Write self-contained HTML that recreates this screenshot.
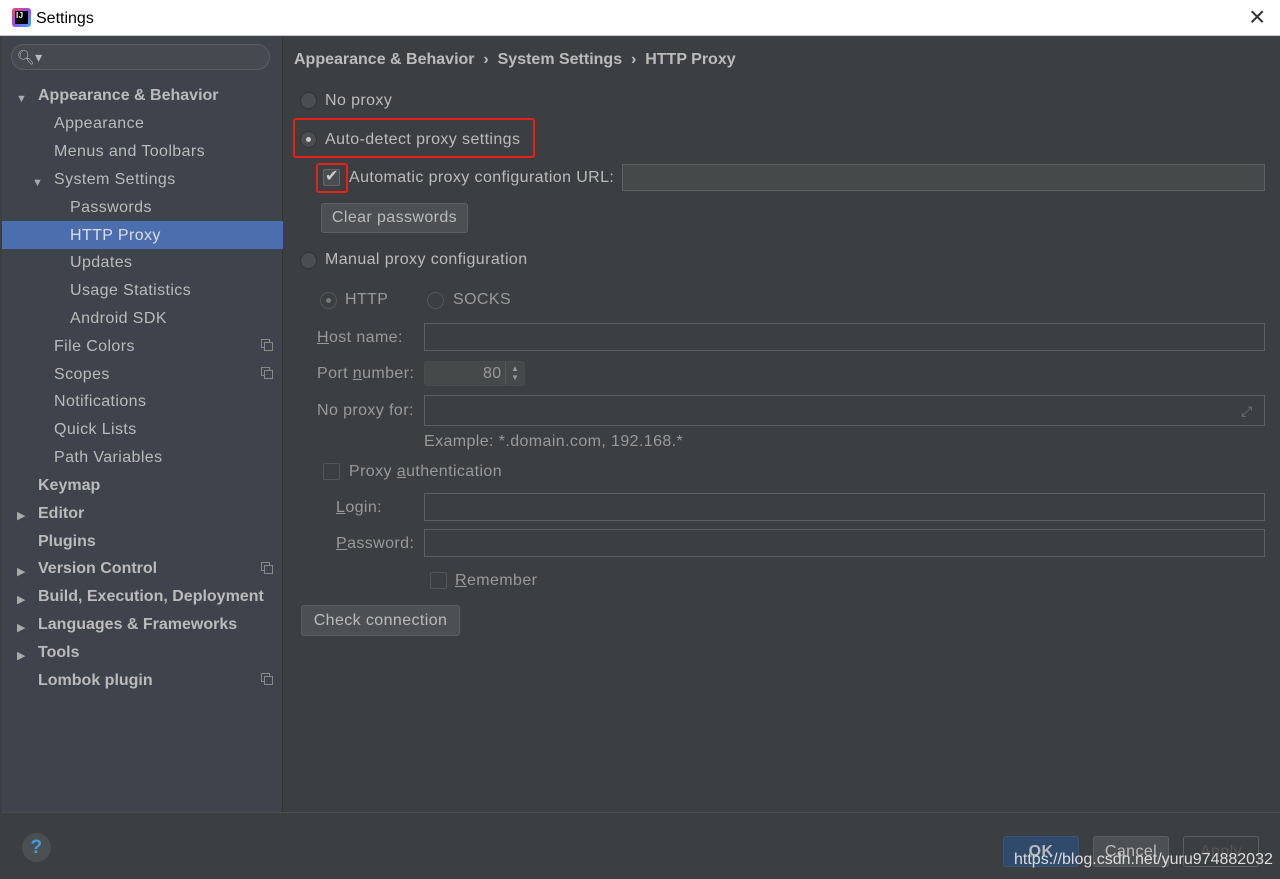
<!DOCTYPE html><html><head><style>
*{box-sizing:border-box;margin:0;padding:0}
body{width:1280px;height:879px;overflow:hidden;background:#3c3f41;font-family:"Liberation Sans","DejaVu Sans",sans-serif;font-size:16px;line-height:21px;letter-spacing:.4px;color:#bbbbbb;position:relative}
.a{position:absolute;white-space:nowrap}
.title{left:0;top:0;width:1280px;height:36px;background:#fff;color:#000;border-bottom:1px solid #ccc}
.side{left:2px;top:36px;width:281px;height:776px;background:#3e434c;border-right:1px solid #333}
.t{position:absolute;white-space:nowrap;color:#bbb}
.b{font-weight:bold;letter-spacing:0}
.tri{position:absolute;font-size:11px;color:#aaa}
.field{position:absolute;border:1px solid #5e6060;background:#3c3f41;height:28px}
.btn{position:absolute;border:1px solid #5e6060;background:#4c5052;border-radius:3px;text-align:center;color:#bbb}
.radio{position:absolute;width:17px;height:17px;border-radius:50%;background:#4b4e50;border:1px solid #333}
.cb{position:absolute;width:17px;height:17px;background:#3c3f41;border:1px solid #666;border-radius:2px}
.cp{position:absolute;width:9px;height:9px;border:1px solid #888;font-size:0}
.cp:after{content:"";position:absolute;left:2px;top:2px;width:7px;height:7px;border:1px solid #888;background:#3e434c}
</style></head><body>
<div class="a title">
<div class="a" style="left:12px;top:8px;width:19px;height:19px;background:linear-gradient(135deg,#f04a5a,#9a4df2,#2fb3f5);border-radius:3px"></div>
<div class="a" style="left:15px;top:11px;width:13px;height:13px;background:#000;color:#fff;font-size:8px;line-height:9px;font-weight:bold;padding-left:1px">IJ</div>
<div class="a" style="left:36px;top:8px;font-size:16px;letter-spacing:0">Settings</div>
<div class="a" style="left:1249px;top:2px;font-size:28px;line-height:30px;color:#333">×</div>
</div>
<div class="a side">
<div class="a" style="left:9px;top:8px;width:259px;height:26px;border:1px solid #5a5e62;border-radius:13px;background:#464a50"></div>
<div class="a" style="left:15px;top:11px;color:#bbb;font-size:14px">🔍︎▾</div>
<div class="tri" style="left:14px;top:53px">▼</div><div class="t b" style="left:36px;top:49px">Appearance &amp; Behavior</div>
<div class="t" style="left:52px;top:77px">Appearance</div>
<div class="t" style="left:52px;top:105px">Menus and Toolbars</div>
<div class="tri" style="left:30px;top:137px">▼</div><div class="t" style="left:52px;top:133px">System Settings</div>
<div class="t" style="left:68px;top:161px">Passwords</div>
<div class="a" style="left:0;top:185px;width:281px;height:28px;background:#4b6eaf"></div>
<div class="t" style="left:68px;top:189px;color:#ddd">HTTP Proxy</div>
<div class="t" style="left:68px;top:216px">Updates</div>
<div class="t" style="left:68px;top:244px">Usage Statistics</div>
<div class="t" style="left:68px;top:272px">Android SDK</div>
<div class="t" style="left:52px;top:300px">File Colors</div><div class="cp" style="left:259px;top:303px"></div>
<div class="t" style="left:52px;top:328px">Scopes</div><div class="cp" style="left:259px;top:331px"></div>
<div class="t" style="left:52px;top:355px">Notifications</div>
<div class="t" style="left:52px;top:383px">Quick Lists</div>
<div class="t" style="left:52px;top:411px">Path Variables</div>
<div class="t b" style="left:36px;top:439px">Keymap</div>
<div class="tri" style="left:15px;top:470px">▶</div><div class="t b" style="left:36px;top:467px">Editor</div>
<div class="t b" style="left:36px;top:495px">Plugins</div>
<div class="tri" style="left:15px;top:526px">▶</div><div class="t b" style="left:36px;top:522px">Version Control</div><div class="cp" style="left:259px;top:526px"></div>
<div class="tri" style="left:15px;top:554px">▶</div><div class="t b" style="left:36px;top:550px">Build, Execution, Deployment</div>
<div class="tri" style="left:15px;top:582px">▶</div><div class="t b" style="left:36px;top:578px">Languages &amp; Frameworks</div>
<div class="tri" style="left:15px;top:610px">▶</div><div class="t b" style="left:36px;top:606px">Tools</div>
<div class="t b" style="left:36px;top:634px">Lombok plugin</div><div class="cp" style="left:259px;top:637px"></div>
</div>
<div class="a b" style="left:294px;top:49px">Appearance &amp; Behavior &nbsp;› &nbsp;System Settings &nbsp;› &nbsp;HTTP Proxy</div>
<div class="radio" style="left:300px;top:92px"></div><div class="a" style="left:325px;top:90px">No proxy</div>
<div class="a" style="left:293px;top:118px;width:242px;height:40px;border:2px solid #e8201a;border-radius:3px"></div>
<div class="radio" style="left:300px;top:131px"></div><div class="a" style="left:306px;top:137px;width:5px;height:5px;border-radius:50%;background:#ccc"></div>
<div class="a" style="left:325px;top:129px">Auto-detect proxy settings</div>
<div class="a" style="left:316px;top:163px;width:32px;height:30px;border:2px solid #e8201a;border-radius:3px"></div>
<div class="cb" style="left:323px;top:169px;background:#4b4e50"></div><div class="a" style="left:325px;top:166px;font-size:16px;color:#ccc">✔</div>
<div class="a" style="left:349px;top:167px">Automatic proxy configuration URL:</div>
<div class="field" style="left:622px;top:164px;width:643px;height:27px;background:#45494a"></div>
<div class="btn" style="left:321px;top:203px;width:147px;height:30px;line-height:28px">Clear passwords</div>
<div class="radio" style="left:300px;top:252px"></div><div class="a" style="left:325px;top:249px">Manual proxy configuration</div>
<div class="radio" style="left:320px;top:292px;background:#3c3f41;border-color:#555"></div><div class="a" style="left:326px;top:298px;width:5px;height:5px;border-radius:50%;background:#777"></div>
<div class="a" style="left:345px;top:289px;color:#999">HTTP</div>
<div class="radio" style="left:427px;top:292px;background:#3c3f41;border-color:#555"></div><div class="a" style="left:453px;top:289px;color:#999">SOCKS</div>
<div class="a" style="left:317px;top:327px;color:#999"><u>H</u>ost name:</div>
<div class="field" style="left:424px;top:323px;width:841px"></div>
<div class="a" style="left:317px;top:363px;color:#999">Port <u>n</u>umber:</div>
<div class="field" style="left:424px;top:361px;width:101px;height:25px;background:#45494a;border-radius:3px;border-color:#4a4d4f"></div>
<div class="a" style="left:483px;top:363px;color:#999">80</div><div class="a" style="left:505px;top:362px;width:1px;height:23px;background:#555"></div>
<div class="a" style="left:511px;top:364px;font-size:8px;color:#999;line-height:9px">▲<br>▼</div>
<div class="a" style="left:317px;top:400px;color:#999">No proxy for:</div>
<div class="field" style="left:424px;top:395px;width:841px;height:31px"></div>
<div class="a" style="left:1241px;top:401px;font-size:14px;color:#777">⤢</div>
<div class="a" style="left:424px;top:431px;color:#999">Example: *.domain.com, 192.168.*</div>
<div class="cb" style="left:323px;top:463px;border-color:#555"></div><div class="a" style="left:349px;top:461px;color:#999">Proxy <u>a</u>uthentication</div>
<div class="a" style="left:336px;top:497px;color:#999"><u>L</u>ogin:</div>
<div class="field" style="left:424px;top:493px;width:841px"></div>
<div class="a" style="left:336px;top:533px;color:#999"><u>P</u>assword:</div>
<div class="field" style="left:424px;top:529px;width:841px"></div>
<div class="cb" style="left:430px;top:572px;border-color:#555"></div><div class="a" style="left:455px;top:570px;color:#999"><u>R</u>emember</div>
<div class="btn" style="left:301px;top:605px;width:159px;height:31px;line-height:29px">Check connection</div>
<div class="a" style="left:2px;top:812px;width:1278px;height:1px;background:#4a4d4f"></div>
<div class="a" style="left:22px;top:833px;width:29px;height:29px;border-radius:50%;background:#4b4f52;color:#3d9ee0;font-weight:bold;font-size:19px;text-align:center;line-height:29px">?</div>
<div class="btn" style="left:1003px;top:836px;width:76px;height:31px;line-height:29px;background:#2f4a6b;border-color:#3a5575;font-weight:bold">OK</div>
<div class="btn" style="left:1093px;top:836px;width:76px;height:31px;line-height:29px">Cancel</div>
<div class="btn" style="left:1183px;top:836px;width:76px;height:31px;line-height:29px;background:#3c3f41;color:#555">Apply</div>
<div class="a" style="left:1014px;top:849px;font-size:16px;letter-spacing:0;color:#ddd">https://blog.csdn.net/yuru974882032</div>
</body></html>
